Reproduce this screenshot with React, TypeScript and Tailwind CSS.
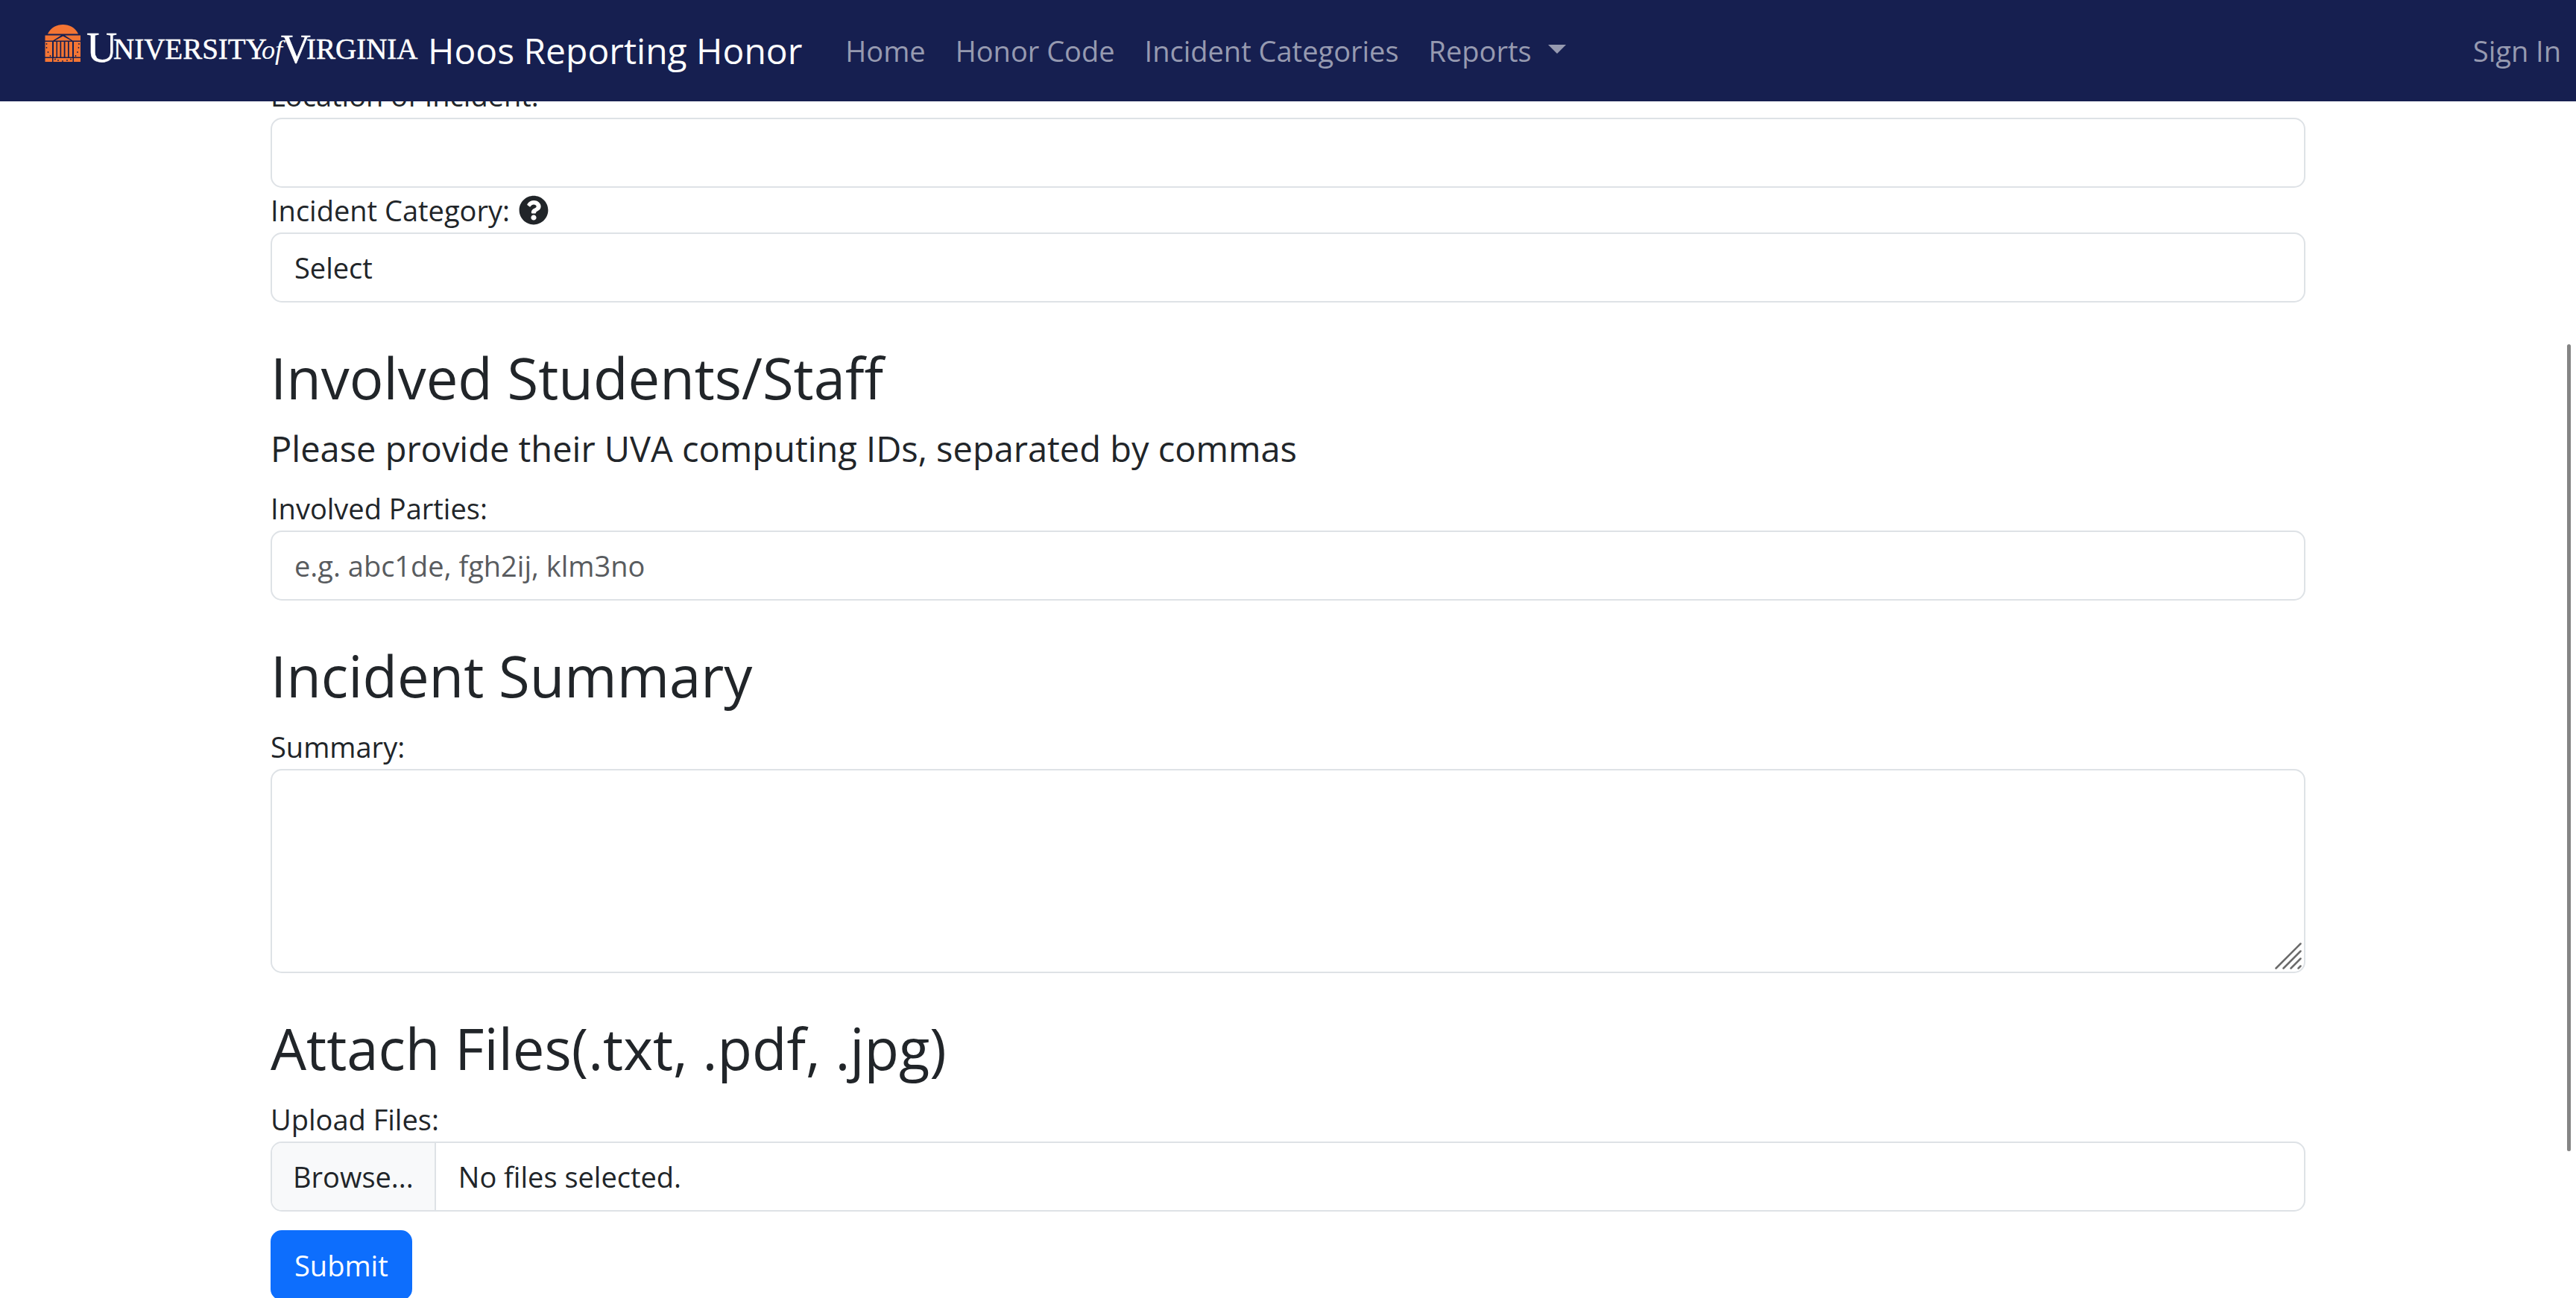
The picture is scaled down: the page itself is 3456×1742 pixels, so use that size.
import React from 'react';
import { FaQuestionCircle } from 'react-icons/fa';

const controlClass =
  'block w-full appearance-none rounded-[15px] border-2 border-[#dee2e6] bg-white px-[30px] py-[15px] text-[38px] leading-[60px] text-[#212529] placeholder:text-[#595c5f] placeholder:opacity-100 outline-none';

function UniversityLogo() {
  return (
    <svg viewBox="0 0 500 60" className="h-[60px] w-[500px] shrink-0 overflow-visible" role="img" aria-label="University of Virginia">
      <g fill="#f47534">
        <path d="M4 12.5C8 4 16 0 24.500 0S41 4 45 12.500Z" />
        <path d="M.5 14.500H22L11 21.500H.5ZM27 14.500H48V21.500H37.500ZM24.500 15.500L35.500 21.500H13.500Z" />
        <path d="M.5 23H10V43.500H.5ZM39 23H48V43.500H39Z" />
        <path d="M12 23H15.500V43.500H12ZM17 23H20.500V43.500H17ZM22.200 23H25.700V43.500H22.200ZM27.500 23H31V43.500H27.500ZM32.700 23H37V43.500H32.700Z" />
        <path d="M.5 45H10V50H.5ZM11.500 45H37.500V50H11.500ZM39 45H48V50H39Z" />
      </g>
      <g fill="#161f50">
        <circle cx="2.500" cy="26" r="0.9" />
        <circle cx="2.500" cy="31" r="0.9" />
        <circle cx="4.500" cy="37" r="0.9" />
        <circle cx="7.500" cy="42" r="0.9" />
        <circle cx="46" cy="26" r="0.9" />
        <circle cx="45.500" cy="31" r="0.9" />
        <circle cx="44" cy="37" r="0.9" />
        <circle cx="41.500" cy="42" r="0.9" />
        <circle cx="18" cy="48" r="0.9" />
        <circle cx="24" cy="49" r="0.9" />
        <circle cx="30" cy="48" r="0.9" />
        <circle cx="14" cy="46.500" r="0.9" />
        <circle cx="35" cy="46.500" r="0.9" />
      </g>
      <g fill="#ffffff" fontFamily="'Liberation Serif', serif">
        <g stroke="#ffffff" strokeWidth="0.5">
          <text x="56" y="50" fontSize="57">U</text>
          <text x="92" y="46" fontSize="39">NIVERSITY</text>
          <text x="317" y="51" fontSize="55">V</text>
          <text x="351" y="46" fontSize="39">IRGINIA</text>
        </g>
        <text x="291" y="46" fontSize="36" fontStyle="italic">of</text>
      </g>
    </svg>
  );
}

function SectionTitle({ children }: { children: React.ReactNode }) {
  return <h2 className="mt-[53px] mb-[17px] text-[76px] leading-[96px]">{children}</h2>;
}

export default function App() {
  return (
    <div className="relative h-screen overflow-hidden bg-white font-['Open_Sans','Noto_Sans',sans-serif] text-[38px] leading-[60px] text-[#212529]">
      <header className="absolute inset-x-0 top-0 z-10 flex h-[136px] items-center bg-[#161f50] pr-[20px] pl-[60px]">
        <a href="#" className="flex items-center gap-[14px] text-[48px] whitespace-nowrap text-white">
          <span className="pb-[10px]">
            <UniversityLogo />
          </span>
          Hoos Reporting Honor
        </a>
        <nav className="ml-[58px] flex flex-1 items-center gap-[40px] whitespace-nowrap text-[#969ab0]">
          <a href="#">Home</a>
          <a href="#">Honor Code</a>
          <a href="#">Incident Categories</a>
          <button type="button" className="flex items-center gap-[22px]">
            Reports
            <svg viewBox="0 0 24 12" className="mb-[4px] h-[12px] w-[24px]" fill="currentColor" aria-hidden="true">
              <path d="M0 0H24L12 12Z" />
            </svg>
          </button>
          <a href="#" className="ml-auto">Sign In</a>
        </nav>
      </header>

      <main className="mx-auto max-w-[2730px] pt-[98px]">
        <form>
          <label htmlFor="location" className="block">Location of Incident:</label>
          <input id="location" type="text" className={controlClass} />

          <label htmlFor="category" className="flex items-center gap-[12px]">
            Incident Category: <FaQuestionCircle className="size-[40px]" />
          </label>
          <select id="category" className={controlClass}>
            <option>Select</option>
          </select>

          <SectionTitle>Involved Students/Staff</SectionTitle>
          <h4 className="mb-[20px] text-[47px] leading-[60px]">
            Please provide their UVA computing IDs, separated by commas
          </h4>
          <label htmlFor="parties" className="block">Involved Parties:</label>
          <input id="parties" type="text" placeholder="e.g. abc1de, fgh2ij, klm3no" className={controlClass} />

          <SectionTitle>Incident Summary</SectionTitle>
          <label htmlFor="summary" className="block">Summary:</label>
          <div className="relative">
            <textarea id="summary" rows={4} className={`${controlClass} resize-none`} />
            <svg
              viewBox="0 0 36 36"
              className="pointer-events-none absolute right-[5px] bottom-[5px] size-[36px]"
              stroke="#6b6b6b"
              strokeWidth="2.500"
              strokeLinecap="round"
              aria-hidden="true"
            >
              <path d="M1.500 34.500L34.500 1.500M11.500 34.500L34.500 11.500M21.500 34.500L34.500 21.500M31.500 34.500L34.500 31.500" />
            </svg>
          </div>

          <SectionTitle>Attach Files(.txt, .pdf, .jpg)</SectionTitle>
          <label htmlFor="files" className="block">Upload Files:</label>
          <input id="files" type="file" multiple className="sr-only" />
          <label
            htmlFor="files"
            className="flex w-full overflow-hidden rounded-[15px] border-2 border-[#dee2e6] bg-white"
          >
            <span className="border-r-2 border-[#dee2e6] bg-[#f8f9fa] px-[28px] py-[15px]">Browse...</span>
            <span className="px-[30px] py-[15px]">No files selected.</span>
          </label>
          <button type="submit" className="mt-[25px] rounded-[15px] bg-[#0d6efd] px-[32px] py-[17px] text-white">
            Submit
          </button>
        </form>
      </main>

      <div className="absolute top-[462px] right-[7px] h-[1083px] w-[5px] rounded-full bg-[#858585]" />
    </div>
  );
}
